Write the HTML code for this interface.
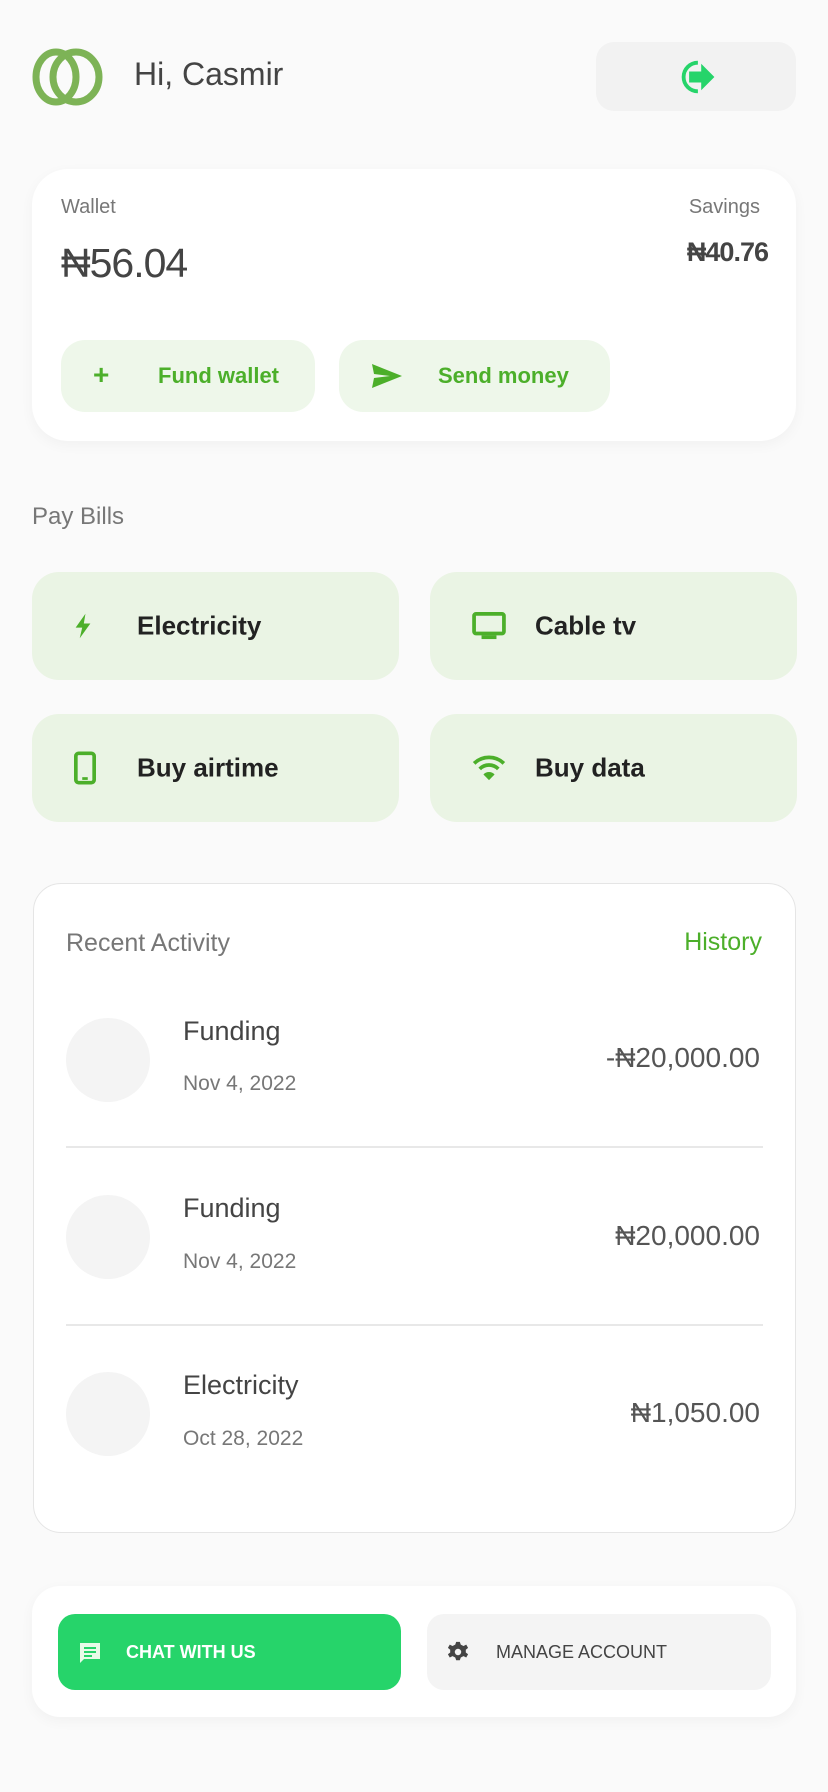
<!DOCTYPE html>
<html><head><meta charset="utf-8"><style>
*{margin:0;padding:0;box-sizing:border-box}
body{width:828px;height:1792px;background:#fafafa;font-family:"Liberation Sans",sans-serif;position:relative;overflow:hidden}
.a{position:absolute}
.card{background:#fff;border-radius:36px;box-shadow:0 4px 14px rgba(0,0,0,0.04)}
.btn{background:#eef7ea;border-radius:24px;color:#4caf2a;font-weight:600;font-size:22px}
.tile{background:#eaf4e4;border-radius:27px;width:367px;height:108px}
.tile span{position:absolute;left:105px;top:50%;transform:translateY(-50%);font-size:26px;font-weight:600;color:#222}
.tile svg{position:absolute;left:42px;top:50%;transform:translateY(-50%)}
.circ{width:84px;height:84px;border-radius:50%;background:#f4f4f4}
.tt{font-size:27px;color:#444;font-weight:500}
.dt{font-size:21px;color:#777}
.am{font-size:28px;color:#555;right:68px}
.hr{left:66px;width:697px;height:2px;background:#e8e8e8}
</style></head><body>
<svg class="a" style="left:32px;top:48px" width="72" height="58" viewBox="0 0 72 58"><ellipse cx="24" cy="29" rx="20" ry="25" fill="none" stroke="#7db356" stroke-width="7"/><ellipse cx="44" cy="29" rx="23" ry="25" fill="none" stroke="#7db356" stroke-width="7"/></svg>
<div class="a" style="left:134px;top:56px;font-size:32px;color:#444;font-weight:500">Hi, Casmir</div>
<div class="a" style="left:596px;top:42px;width:200px;height:69px;background:#f2f2f2;border-radius:18px"></div>
<svg class="a" style="left:677px;top:58px" width="44" height="38" viewBox="0 0 40 34"><path d="M19 4 A13 13 0 1 0 19 30" fill="none" stroke="#26d46a" stroke-width="3.5"/><path d="M11 12h11V5l12 12-12 12v-7H11z" fill="#26d46a"/></svg>

<div class="a card" style="left:32px;top:169px;width:764px;height:272px"></div>
<div class="a" style="left:61px;top:196px;font-size:20px;color:#777">Wallet</div>
<div class="a" style="left:61px;top:240px;font-size:41px;color:#444;font-weight:500;letter-spacing:-1px">₦56.04</div>
<div class="a" style="right:68px;top:196px;font-size:20px;color:#777">Savings</div>
<div class="a" style="right:60px;top:237px;font-size:27px;color:#444;font-weight:600;letter-spacing:-1px">₦40.76</div>
<div class="a btn" style="left:61px;top:340px;width:254px;height:72px"><span class="a" style="left:32px;top:19px;font-size:28px">+</span><span class="a" style="left:97px;top:23px">Fund wallet</span></div>
<div class="a btn" style="left:339px;top:340px;width:271px;height:72px"><svg class="a" style="left:33px;top:24px" width="30" height="24" viewBox="0 0 30 24"><path d="M0 0L30 12L0 24L2 14L18 12L2 10z" fill="#4caf2a"/></svg><span class="a" style="left:99px;top:23px">Send money</span></div>

<div class="a" style="left:32px;top:503px;font-size:24px;color:#777">Pay Bills</div>
<div class="a tile" style="left:32px;top:572px"><svg width="18" height="28" viewBox="0 0 22 30"><path d="M14 0L2 17h8l-3 13L20 12h-8z" fill="#4caf2a"/></svg><span>Electricity</span></div>
<div class="a tile" style="left:430px;top:572px"><svg width="34" height="28" viewBox="0 0 36 30"><rect x="2" y="2" width="32" height="21" rx="2" fill="none" stroke="#4caf2a" stroke-width="4"/><rect x="10" y="25" width="16" height="4" fill="#4caf2a"/></svg><span>Cable tv</span></div>
<div class="a tile" style="left:32px;top:714px"><svg width="22" height="34" viewBox="0 0 24 36"><rect x="2" y="2" width="20" height="32" rx="3" fill="none" stroke="#4caf2a" stroke-width="4"/><rect x="9" y="28" width="6" height="3" fill="#4caf2a"/></svg><span>Buy airtime</span></div>
<div class="a tile" style="left:430px;top:714px"><svg width="34" height="26" viewBox="0 0 36 28"><path d="M2 9a23 23 0 0 1 32 0" fill="none" stroke="#4caf2a" stroke-width="4"/><path d="M8 15a14 14 0 0 1 20 0" fill="none" stroke="#4caf2a" stroke-width="4"/><path d="M12 21l6 6 6-6a8 8 0 0 0-12 0z" fill="#4caf2a"/></svg><span>Buy data</span></div>

<div class="a" style="left:33px;top:883px;width:763px;height:650px;background:#fff;border:1.5px solid #e5e5e5;border-radius:28px"></div>
<div class="a" style="left:66px;top:929px;font-size:25px;color:#777">Recent Activity</div>
<div class="a" style="right:66px;top:928px;font-size:25px;color:#4caf2a">History</div>

<div class="a circ" style="left:66px;top:1018px"></div>
<div class="a tt" style="left:183px;top:1016px">Funding</div>
<div class="a dt" style="left:183px;top:1072px">Nov 4, 2022</div>
<div class="a am" style="top:1042px">-₦20,000.00</div>
<div class="a hr" style="top:1146px"></div>
<div class="a circ" style="left:66px;top:1195px"></div>
<div class="a tt" style="left:183px;top:1193px">Funding</div>
<div class="a dt" style="left:183px;top:1250px">Nov 4, 2022</div>
<div class="a am" style="top:1220px">₦20,000.00</div>
<div class="a hr" style="top:1324px"></div>
<div class="a circ" style="left:66px;top:1372px"></div>
<div class="a tt" style="left:183px;top:1370px">Electricity</div>
<div class="a dt" style="left:183px;top:1427px">Oct 28, 2022</div>
<div class="a am" style="top:1397px">₦1,050.00</div>

<div class="a card" style="left:32px;top:1586px;width:764px;height:131px;border-radius:28px"></div>
<div class="a" style="left:58px;top:1614px;width:343px;height:76px;background:#26d46a;border-radius:17px"><svg class="a" style="left:20px;top:27px" width="24" height="24" viewBox="0 0 24 24"><path d="M2 2h20v16H6l-4 4z" fill="#e8fbe8"/><path d="M6 7h12M6 11h12M6 15h8" stroke="#26d46a" stroke-width="2"/></svg><span class="a" style="left:68px;top:28px;color:#fff;font-size:18px;font-weight:700">CHAT WITH US</span></div>
<div class="a" style="left:427px;top:1614px;width:344px;height:76px;background:#f4f4f4;border-radius:17px"><svg class="a" style="left:20px;top:27px" width="22" height="22" viewBox="0 0 24 24"><path d="M10 1h4l1 3 3 1.5 3-1.5 2 3.5-2.5 2v3l2.5 2-2 3.5-3-1.5-3 1.5-1 3h-4l-1-3-3-1.5-3 1.5-2-3.5 2.5-2v-3L1 7.5 3 4l3 1.5L9 4z" fill="#444"/><circle cx="12" cy="12" r="3.5" fill="#f4f4f4"/></svg><span class="a" style="left:69px;top:28px;color:#444;font-size:18px;font-weight:500">MANAGE ACCOUNT</span></div>
</body></html>
